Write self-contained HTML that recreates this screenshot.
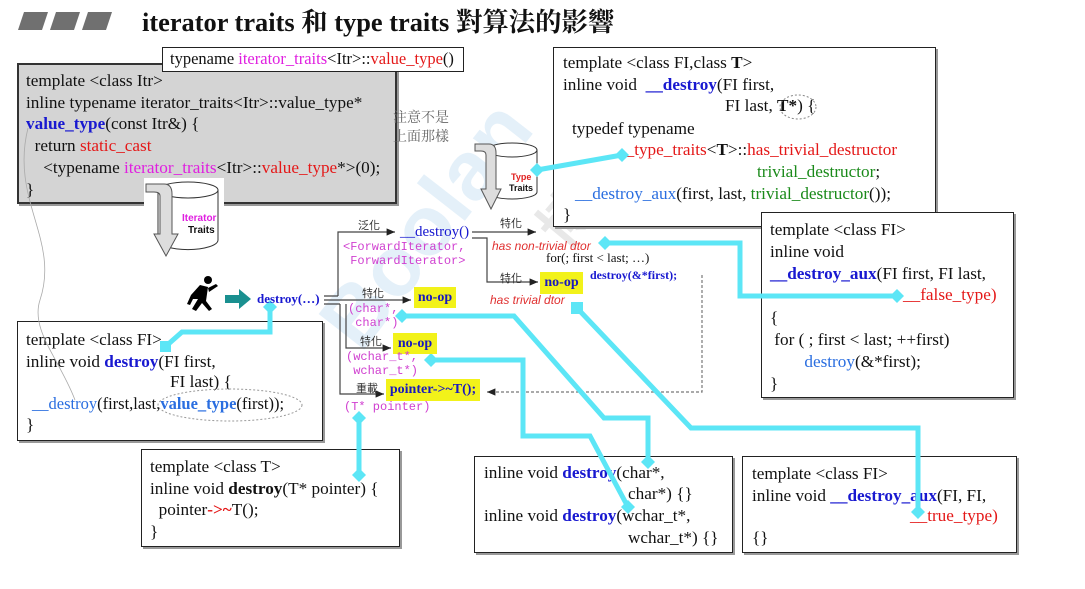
<!DOCTYPE html>
<html><head><meta charset="utf-8">
<style>
*{margin:0;padding:0;box-sizing:border-box}
body{width:1085px;height:589px;background:#fff;position:relative;overflow:hidden;font-family:"Liberation Serif","Noto Serif CJK SC",serif;font-size:17.2px;color:#111}
.a{position:absolute;white-space:pre;line-height:20px}
.box{position:absolute;border:1.5px solid #222;background:#fff;box-shadow:2px 2px 0 #999}
.m{color:#e020e0}.r{color:#e41818}.b{color:#1818d0;font-weight:bold}.lb{color:#2a6ee0}.g{color:#1a8a1a}
.mono{font-family:"Liberation Mono",monospace;font-size:12px;color:#d040d0;line-height:14px}
.y{position:absolute;background:#f2f21a;color:#1818c0;font-size:14px;font-weight:bold;text-align:center}
.cn{font-family:"Noto Sans CJK TC",sans-serif;font-size:11px;color:#333}
.it{font-family:"Liberation Sans",sans-serif;font-style:italic;font-size:12px;color:#e03030}
</style></head><body>
<svg class="a" style="left:18px;top:10px" width="100" height="22"><polygon points="6,2 30,2 24,20 0,20" fill="#707070"/><polygon points="38,2 62,2 56,20 32,20" fill="#707070"/><polygon points="70,2 94,2 88,20 64,20" fill="#707070"/></svg>
<div class="a" style="left:142px;top:6px;font-size:26.4px;font-weight:bold;line-height:32px;font-family:'Liberation Serif','Noto Serif CJK TC',serif">iterator traits 和 type traits 對算法的影響</div>

<div class="a" style="left:330px;top:330px;font-family:'Liberation Sans',sans-serif;font-size:84px;font-weight:bold;color:rgba(120,180,225,0.2);transform:rotate(-52deg);transform-origin:left top">Boolan</div>
<div class="a" style="left:540px;top:230px;font-family:'Noto Sans CJK SC',sans-serif;font-size:56px;font-weight:bold;color:rgba(140,140,140,0.2);transform:rotate(-50deg);transform-origin:left top">博览网</div>

<div class="box" style="left:17px;top:63px;width:380px;height:141px;background:#d4d4d4;border:2px solid #333"></div>
<div class="a" style="left:26px;top:70px;line-height:21.7px">template &lt;class Itr&gt;
inline typename iterator_traits&lt;Itr&gt;::value_type*
<span class="b">value_type</span>(const Itr&amp;) {
  return <span class="r">static_cast</span>
    &lt;typename <span class="m">iterator_traits</span>&lt;Itr&gt;::<span class="r">value_type</span>*&gt;(0);
}</div>
<div class="box" style="left:162px;top:47px;width:302px;height:25px;box-shadow:none"></div>
<div class="a" style="left:170px;top:49px;font-size:16.5px">typename <span class="m">iterator_traits</span>&lt;Itr&gt;::<span class="r">value_type</span>()</div>
<div class="a" style="left:393px;top:108px;font-family:'Noto Serif CJK TC',serif;font-size:14px;color:#666;line-height:19px">注意不是
上面那樣</div>

<svg class="a" style="left:144px;top:178px" width="80" height="80"><rect x="0" y="0" width="80" height="80" fill="#fff"/><path d="M14 12 v50 a25 8 0 0 0 60 0 v-50" fill="#fff" stroke="#333"/><ellipse cx="44" cy="12" rx="30" ry="8" fill="#fff" stroke="#333"/><path d="M2 6 h18 q8 0 8 10 v40 h6 l-12 22 l-12 -22 h6 v-38 q0 -4 -6 -4 h-8z" fill="#ddd" stroke="#555"/><text x="38" y="43" font-family="Liberation Sans" font-weight="bold" font-size="10" fill="#e020e0">Iterator</text><text x="44" y="55" font-family="Liberation Sans" font-weight="bold" font-size="10" fill="#111">Traits</text></svg>
<svg class="a" style="left:473px;top:140px" width="68" height="72"><path d="M14 10 v42 a25 7 0 0 0 50 0 v-42" fill="#fff" stroke="#333"/><ellipse cx="39" cy="10" rx="25" ry="7" fill="#fff" stroke="#333"/><path d="M2 4 h14 q7 0 7 9 v36 h5 l-10 20 l-10 -20 h5 v-34 q0 -4 -5 -4 h-6z" fill="#ddd" stroke="#555"/><text x="38" y="40" font-family="Liberation Sans" font-weight="bold" font-size="9" fill="#e02020">Type</text><text x="36" y="51" font-family="Liberation Sans" font-weight="bold" font-size="9" fill="#111">Traits</text></svg>

<div class="box" style="left:553px;top:47px;width:383px;height:180px"></div>
<div class="a" style="left:563px;top:52px;line-height:22px">template &lt;class FI,class <b>T</b>&gt;
inline void  <span class="b">__destroy</span>(FI first,</div>
<div class="a" style="left:725px;top:96px">FI last, <b>T*</b>) {</div>
<div class="a" style="left:572px;top:119px">typedef typename</div>
<div class="a" style="left:617px;top:140px"><span class="r">__type_traits</span>&lt;<b>T</b>&gt;::<span class="r">has_trivial_destructor</span></div>
<div class="a" style="left:757px;top:162px" ><span class="g">trivial_destructor</span>;</div>
<div class="a" style="left:575px;top:184px"><span class="lb">__destroy_aux</span>(first, last, <span class="g">trivial_destructor</span>());</div>
<div class="a" style="left:563px;top:205px">}</div>

<div class="box" style="left:761px;top:212px;width:253px;height:186px"></div>
<div class="a" style="left:770px;top:219px;line-height:22px">template &lt;class FI&gt;
inline void
<span class="b">__destroy_aux</span>(FI first, FI last,</div>
<div class="a r" style="left:903px;top:285px">__false_type)</div>
<div class="a" style="left:770px;top:307px;line-height:22px">{
 for ( ; first &lt; last; ++first)
        <span class="lb">destroy</span>(&amp;*first);
}</div>

<div class="box" style="left:17px;top:321px;width:306px;height:120px"></div>
<div class="a" style="left:26px;top:329px;line-height:21.5px">template &lt;class FI&gt;
inline void <span class="b">destroy</span>(FI first,</div>
<div class="a" style="left:170px;top:372px">FI last) {</div>
<div class="a" style="left:32px;top:394px;font-size:16.5px"><span class="lb">__destroy</span>(first,last,<span class="b" style="color:#2a6ee0">value_type</span>(first));</div>
<div class="a" style="left:26px;top:415px">}</div>

<div class="box" style="left:141px;top:449px;width:259px;height:98px"></div>
<div class="a" style="left:150px;top:456px;line-height:21.5px">template &lt;class T&gt;
inline void <b>destroy</b>(T* pointer) {
  pointer<b class="r">-&gt;~</b>T();
}</div>

<div class="box" style="left:474px;top:456px;width:259px;height:97px"></div>
<div class="a" style="left:484px;top:463px">inline void <span class="b">destroy</span>(char*,</div>
<div class="a" style="left:628px;top:484px">char*) {}</div>
<div class="a" style="left:484px;top:506px">inline void <span class="b">destroy</span>(wchar_t*,</div>
<div class="a" style="left:628px;top:528px">wchar_t*) {}</div>

<div class="box" style="left:742px;top:456px;width:275px;height:97px"></div>
<div class="a" style="left:752px;top:463px;line-height:21.5px">template &lt;class FI&gt;
inline void <span class="b">__destroy_aux</span>(FI, FI,</div>
<div class="a r" style="left:910px;top:506px">__true_type)</div>
<div class="a" style="left:752px;top:528px">{}</div>

<svg class="a" style="left:0;top:0" width="1085" height="589">
<defs><marker id="ar" markerWidth="8" markerHeight="8" refX="7" refY="4" orient="auto"><path d="M0 1 L7 4 L0 7z" fill="#222"/></marker></defs>
<g stroke="#444" stroke-width="1.2" fill="none">
<path d="M324 296 h14 M324 300 h18 M324 304 h16"/>
<path d="M338 296 V232 H395" marker-end="url(#ar)"/>
<path d="M342 300 H411" marker-end="url(#ar)"/>
<path d="M346 304 V348 H391" marker-end="url(#ar)"/>
<path d="M340 304 V394 H384" marker-end="url(#ar)"/>
<path d="M472 232 H536" marker-end="url(#ar)"/>
<path d="M472 238 H487 V282 H538" marker-end="url(#ar)"/>
<path d="M702 275 V392 H487" stroke-dasharray="3,2" stroke="#777" marker-end="url(#ar)"/>
</g>
<ellipse cx="798" cy="107" rx="18" ry="12" fill="none" stroke="#888" stroke-dasharray="2,2"/>
<ellipse cx="230" cy="405" rx="72" ry="16" fill="none" stroke="#999" stroke-dasharray="2,2"/>
<path d="M28 128 C10 200 60 240 40 300 C30 330 60 360 75 400" fill="none" stroke="#aaa" stroke-width="0.8"/>
<g fill="#000"><circle cx="208" cy="280" r="4"/><path d="M200 285 l8 2 l-2 14 l6 8 l-3 2 l-7 -8 l-6 8 l-4 -2 l6 -10 l-5 0 l-3 6 l-3 -1 l4 -9z M208 288 l8 -4 l2 2 l-9 6z"/></g>
<path d="M225 295 h14 v-6 l12 10 l-12 10 v-6 h-14z" fill="#1a9090"/>
<g stroke="#5ce6f6" stroke-width="5" fill="none" stroke-linejoin="miter">
<path d="M622 155 L537 170"/>
<path d="M605 243 H740 V296 H897"/>
<path d="M270 307 V332 H182 L165 347"/>
<path d="M402 316 H514 L604 418 H648 V462"/>
<path d="M431 360 H523 V436 H590 L628 507"/>
<path d="M577 308 L691 428 H918 V512"/>
<path d="M359 418 V475"/>
</g>
<g fill="#5ce6f6">
<path d="M622 148 l7 7 l-7 7 l-7 -7z"/><path d="M537 163 l7 7 l-7 7 l-7 -7z"/>
<path d="M605 236 l7 7 l-7 7 l-7 -7z"/><path d="M897 289 l7 7 l-7 7 l-7 -7z"/>
<path d="M270 300 l7 7 l-7 7 l-7 -7z"/><rect x="160" y="341" width="11" height="11"/>
<path d="M402 309 l7 7 l-7 7 l-7 -7z"/><path d="M648 455 l7 7 l-7 7 l-7 -7z"/>
<path d="M431 353 l7 7 l-7 7 l-7 -7z"/><path d="M628 500 l7 7 l-7 7 l-7 -7z"/>
<rect x="571" y="302" width="12" height="12"/><path d="M918 505 l7 7 l-7 7 l-7 -7z"/>
<path d="M359 411 l7 7 l-7 7 l-7 -7z"/><path d="M359 468 l7 7 l-7 7 l-7 -7z"/>
</g>
</svg>

<div class="a" style="left:257px;top:289px;font-size:13px;font-weight:bold;color:#1818d0">destroy(…)</div>
<div class="a cn" style="left:358px;top:215px">泛化</div>
<div class="a" style="left:400px;top:222px;font-size:15px;color:#1818d0">__destroy()</div>
<div class="a mono" style="left:343px;top:240px">&lt;ForwardIterator,
 ForwardIterator&gt;</div>
<div class="a cn" style="left:362px;top:283px">特化</div>
<div class="y" style="left:414px;top:287px;width:42px;height:21px;line-height:21px">no-op</div>
<div class="a mono" style="left:348px;top:302px">(char*,
 char*)</div>
<div class="a cn" style="left:360px;top:331px">特化</div>
<div class="y" style="left:393px;top:333px;width:44px;height:21px;line-height:21px">no-op</div>
<div class="a mono" style="left:346px;top:350px">(wchar_t*,
 wchar_t*)</div>
<div class="a cn" style="left:356px;top:378px">重載</div>
<div class="y" style="left:386px;top:379px;width:94px;height:22px;line-height:22px">pointer-&gt;~T();</div>
<div class="a mono" style="left:344px;top:400px">(T* pointer)</div>
<div class="a cn" style="left:500px;top:213px">特化</div>
<div class="a it" style="left:492px;top:236px">has non-trivial dtor</div>
<div class="a" style="left:546px;top:248px;font-size:13px">for(; first &lt; last; …)</div>
<div class="a" style="left:590px;top:265px;font-size:12px;font-weight:bold;color:#1818d0">destroy(&amp;*first);</div>
<div class="a cn" style="left:500px;top:268px">特化</div>
<div class="y" style="left:540px;top:272px;width:43px;height:22px;line-height:22px">no-op</div>
<div class="a it" style="left:490px;top:290px">has trivial dtor</div>
</body></html>
